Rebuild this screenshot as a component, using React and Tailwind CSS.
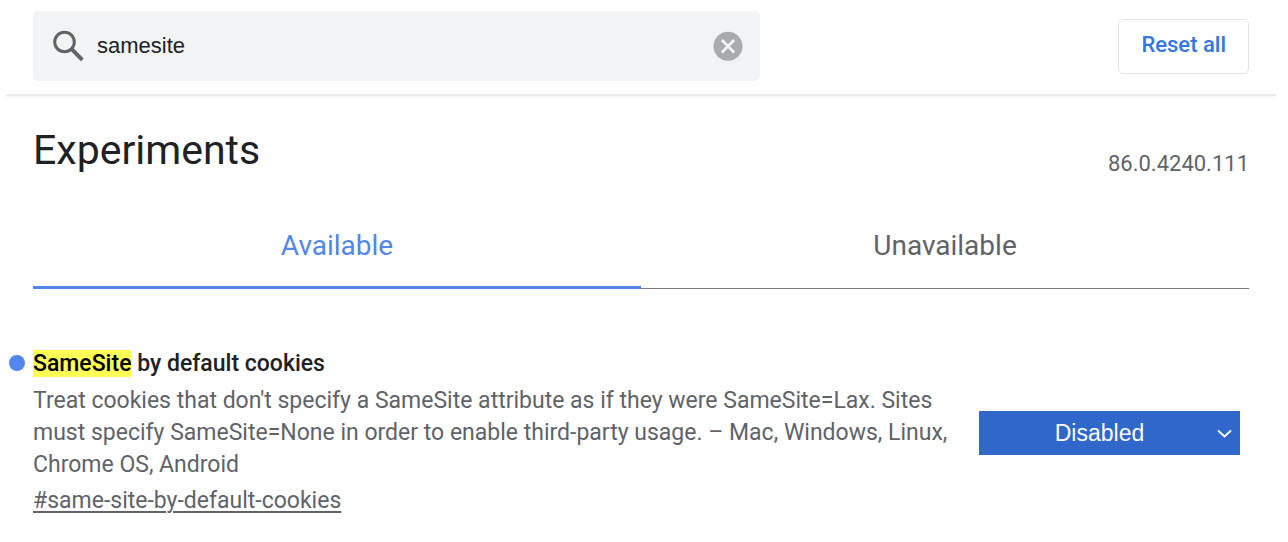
import React, { useState } from "react";

const experiments = [
  {
    id: "same-site-by-default-cookies",
    name: "SameSite by default cookies",
    description:
      "Treat cookies that don't specify a SameSite attribute as if they were SameSite=Lax. Sites must specify SameSite=None in order to enable third-party usage.",
    platforms: "Mac, Windows, Linux, Chrome OS, Android",
    value: "Disabled",
  },
];

// wraps the first match of the query in a yellow mark
function Highlight({ text, query }) {
  const start = query ? text.toLowerCase().indexOf(query.toLowerCase()) : -1;
  if (start < 0) return text;
  const end = start + query.length;

  return (
    <>
      {text.slice(0, start)}
      <mark className="bg-[#ffff54] text-black">{text.slice(start, end)}</mark>
      {text.slice(end)}
    </>
  );
}

function Header({ query, setQuery, onReset }) {
  return (
    <header className="ml-[6px] mr-3 flex items-center justify-between border-b-2 border-[#ebebeb] px-[27px] pt-[11px] pb-[13px] shadow-[0_2px_2px_#f7f7f7]">
      <div className="flex h-[70px] w-[727px] max-w-3/5 items-center rounded-[5px] bg-[#f1f3f4] pl-5 pr-[17px]">
        <svg className="h-8 w-8 shrink-0" viewBox="0 0 32 32" fill="none" stroke="#5f6368">
          <circle cx="11.5" cy="12" r="9.8" strokeWidth="3" />
          <path d="M18.7 19.2 29.3 29.8" strokeWidth="4" />
        </svg>
        <input
          type="text"
          aria-label="Search flags"
          value={query}
          onChange={(e) => setQuery(e.target.value)}
          className="ml-3 min-w-0 flex-1 bg-transparent font-['Liberation_Sans',sans-serif] text-[22px] leading-8 text-[#202124] outline-none"
        />
        <button type="button" aria-label="Clear search" onClick={() => setQuery("")}>
          <svg className="h-[30px] w-[30px]" viewBox="0 0 30 30" fill="none">
            <circle cx="15" cy="15.3" r="14.5" fill="#a9abae" />
            <path d="M8.8 9.1 21.2 21.5M21.2 9.1 8.8 21.5" stroke="#f1f3f4" strokeWidth="2.8" />
          </svg>
        </button>
      </div>

      <button
        type="button"
        onClick={onReset}
        className="h-[55px] rounded-[5px] border border-[#e3e4e6] px-[22px] pb-[3px] text-[22px] font-medium text-[#3576e3]"
      >
        Reset all
      </button>
    </header>
  );
}

function Tabs({ tab, setTab }) {
  return (
    <div role="tablist" className="mt-[30px] grid h-[79px] grid-cols-2 text-[28px] leading-8">
      {["Available", "Unavailable"].map((name) => (
        <button
          key={name}
          type="button"
          role="tab"
          aria-selected={tab === name}
          onClick={() => setTab(name)}
          className={`flex items-start justify-center pt-5 ${
            tab === name
              ? "border-b-3 border-[#5186ec] text-[#5186ec]"
              : "border-b border-[#77797d] text-[#5f6368]"
          }`}
        >
          {name}
        </button>
      ))}
    </div>
  );
}

function Experiment({ item, query, value, setValue }) {
  const changed = value !== "Default";

  return (
    <section className="flex items-center justify-between gap-6">
      <div className="min-w-0 max-w-[922px] flex-1 text-[23px] leading-8 text-[#5f6368]">
        <div className="relative">
          {changed && (
            <span className="absolute top-[7px] -left-6 h-4 w-4 rounded-full bg-[#5186ec]" />
          )}
          <h3 className="font-medium text-[#202124]">
            <Highlight text={item.name} query={query} />
          </h3>
        </div>
        <p className="mt-[5px]">{`${item.description} – ${item.platforms}`}</p>
        <a
          href={`#${item.id}`}
          className="mt-1 inline-block underline decoration-2 underline-offset-3"
        >
          {`#${item.id}`}
        </a>
      </div>

      <div className="relative mr-[9px] shrink-0">
        <select
          aria-label={item.name}
          value={value}
          onChange={(e) => setValue(e.target.value)}
          className="block h-11 w-[261px] appearance-none bg-[#3067cb] pt-[2px] pr-5 text-center font-['Liberation_Sans',sans-serif] text-[23px] text-white [text-align-last:center]"
        >
          <option>Default</option>
          <option>Enabled</option>
          <option>Disabled</option>
        </select>
        <svg
          className="pointer-events-none absolute top-[18px] right-2 h-[10px] w-[15px]"
          viewBox="0 0 15 10"
          fill="none"
          stroke="#fff"
          strokeWidth="2"
        >
          <path d="M1 1.5 7.5 7.5 14 1.5" />
        </svg>
      </div>
    </section>
  );
}

export default function App() {
  const [query, setQuery] = useState("samesite");
  const [tab, setTab] = useState("Available");
  const [value, setValue] = useState(experiments[0].value);

  return (
    <div className="bg-white pb-6 font-[Roboto,sans-serif]">
      <Header query={query} setQuery={setQuery} onReset={() => setValue("Default")} />

      <main className="ml-[33px] mr-[39px] pt-[30px]">
        <div className="flex items-start justify-between">
          <h1 className="text-[41px] leading-[48px] text-[#202124]">Experiments</h1>
          <span className="pt-[22px] text-[22px] leading-8 text-[#5f6368]">86.0.4240.111</span>
        </div>

        <Tabs tab={tab} setTab={setTab} />

        <div className="mt-[59px]">
          {tab === "Available" &&
            experiments.map((item) => (
              <Experiment
                key={item.id}
                item={item}
                query={query}
                value={value}
                setValue={setValue}
              />
            ))}
        </div>
      </main>
    </div>
  );
}
